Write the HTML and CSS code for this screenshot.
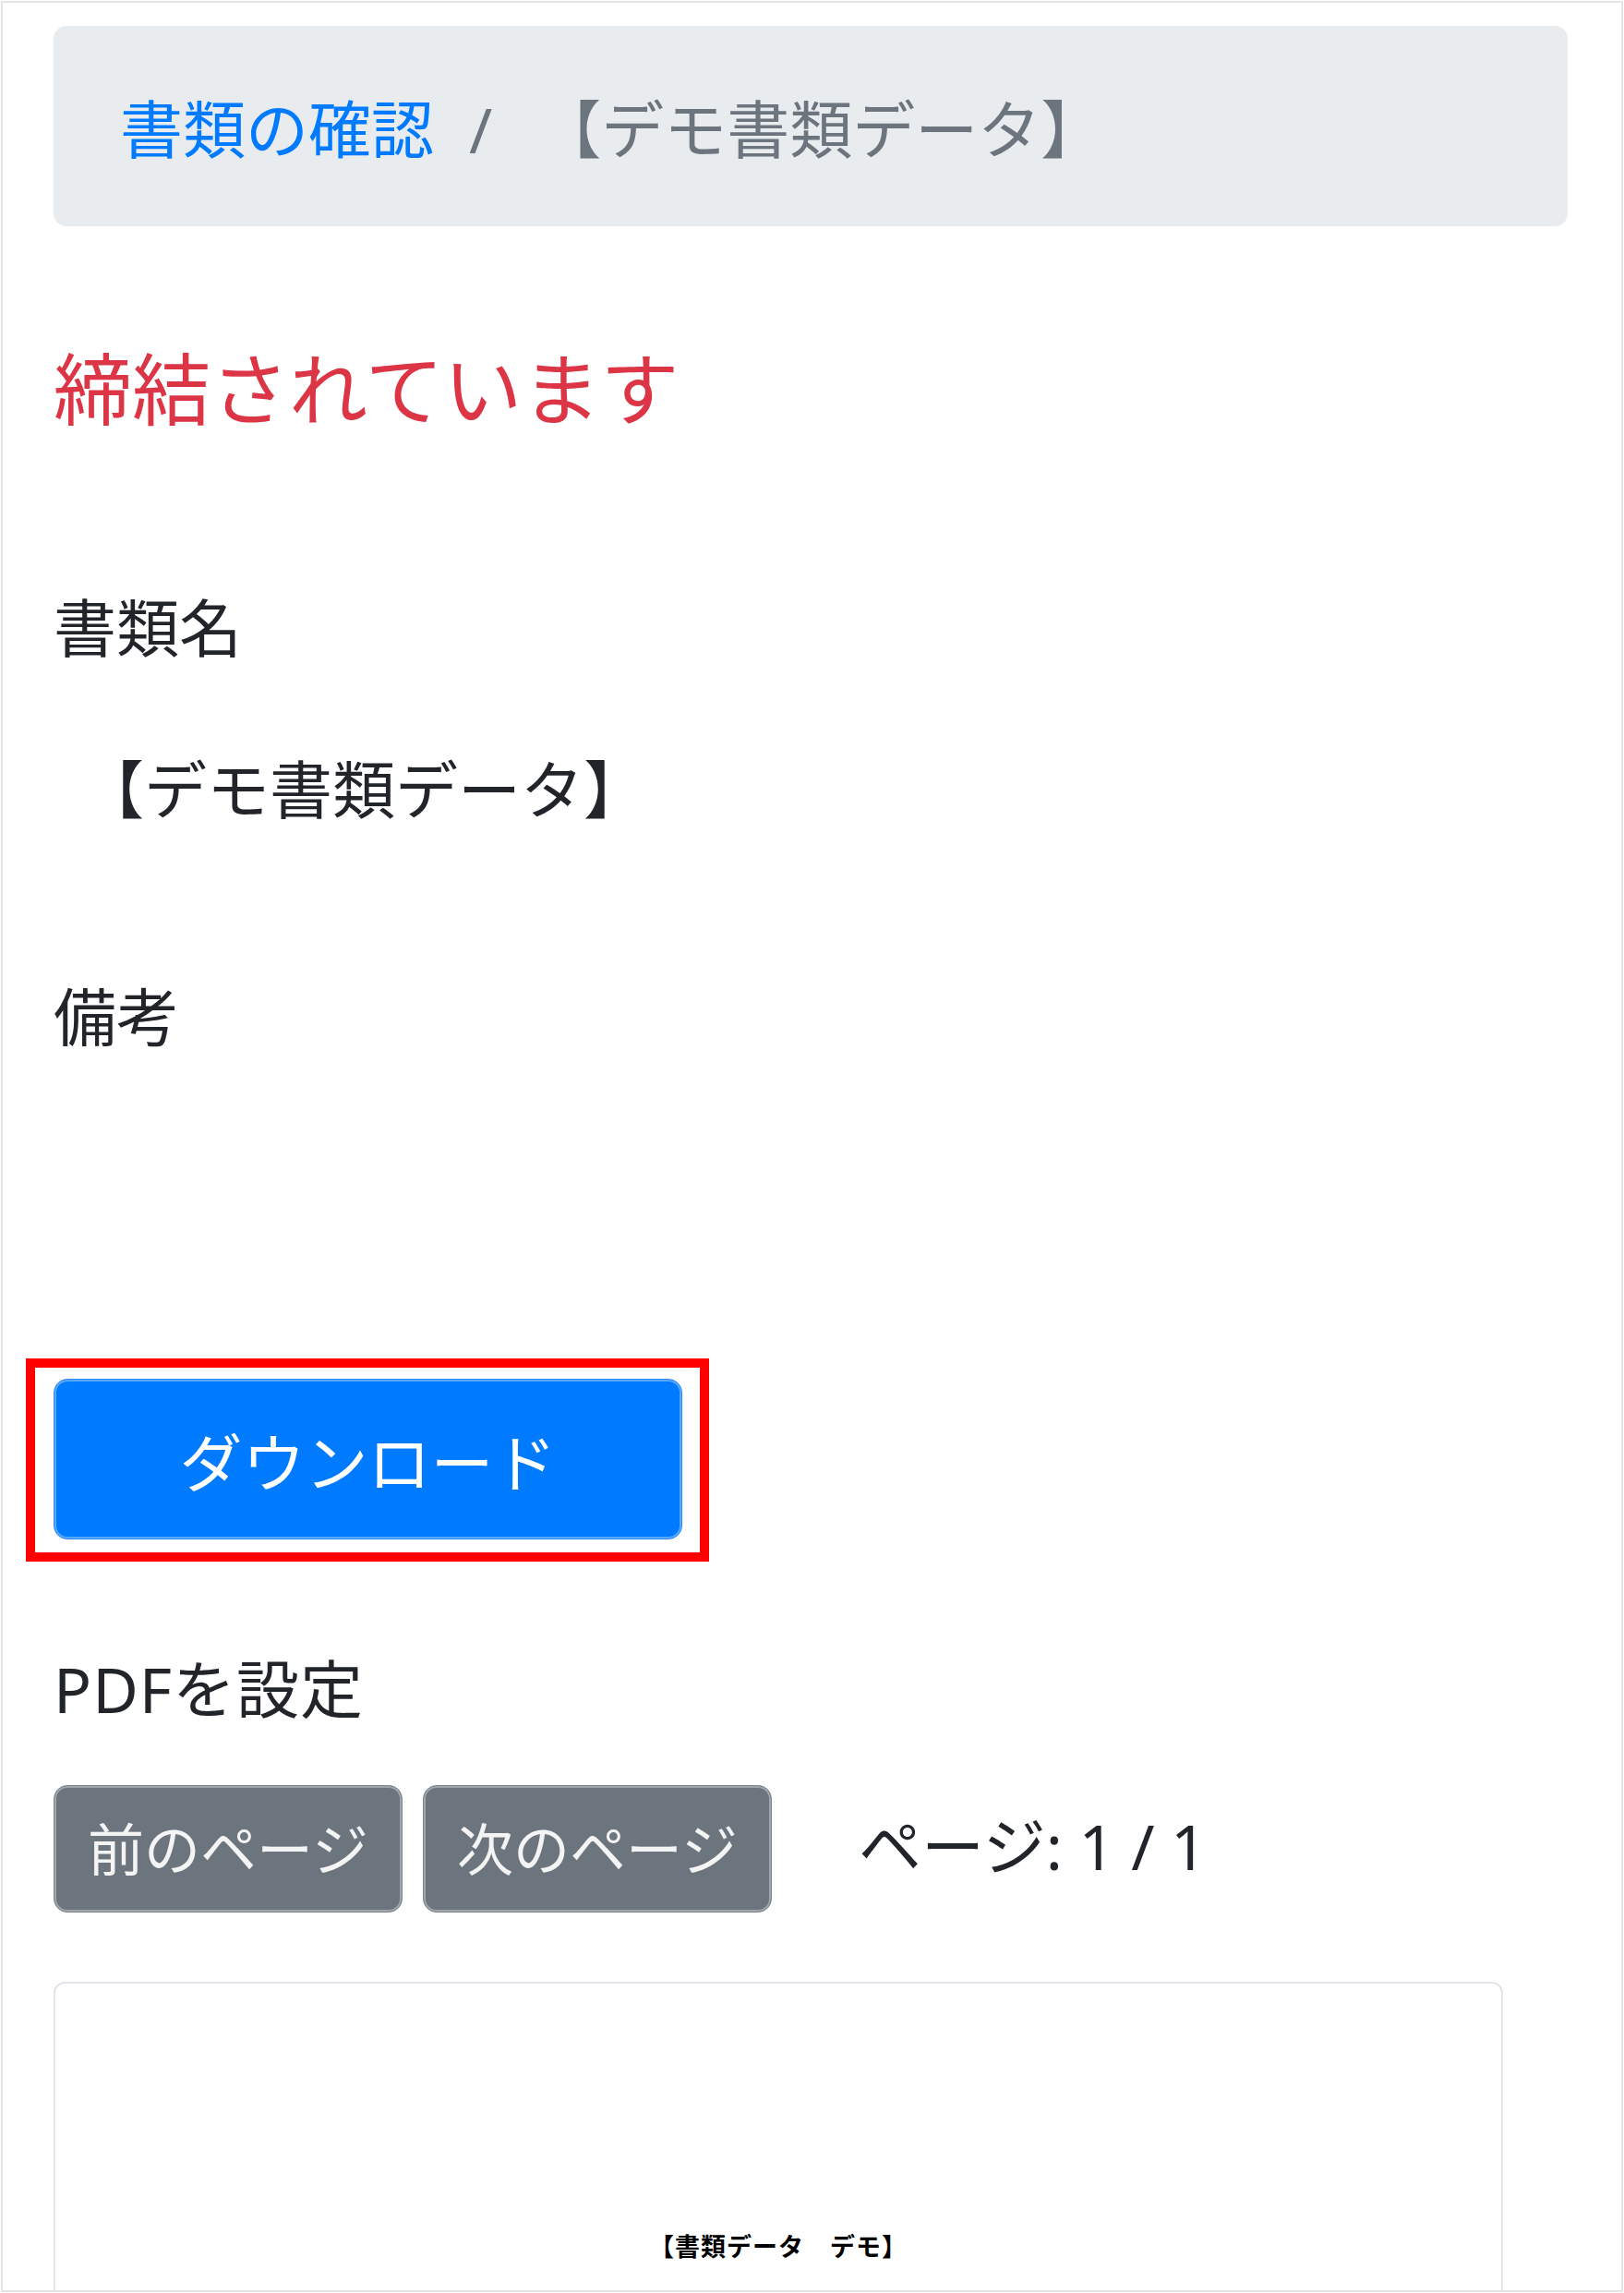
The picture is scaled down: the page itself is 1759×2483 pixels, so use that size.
FILE: index.html
```html
<!DOCTYPE html>
<html lang="ja">
<head>
    <meta charset="UTF-8">
    <meta name="viewport" content="width=device-width, initial-scale=1.0">
    <title>書類の確認</title>
    <link rel="stylesheet" href="styles.css">
</head>
<body>
    <div class="frame">
        <!-- Breadcrumb -->
        <nav class="crumbs">
            <a class="crumb-link" href="#">書類の確認</a>
            <span class="crumb-sep">/</span>
            <span class="crumb-current">【デモ書類データ】</span>
        </nav>

        <h5 class="status">締結されています</h5>

        <div class="field-label">書類名</div>
        <div class="field-value">【デモ書類データ】</div>

        <div class="field-label remarks">備考</div>

        <div class="dl-wrap">
            <button class="btn btn-primary btn-download">ダウンロード</button>
        </div>

        <div class="pdf-title">PDFを設定</div>
        <div class="pager">
            <button class="btn btn-secondary">前のページ</button>
            <button class="btn btn-secondary">次のページ</button>
            <span class="page-info">ページ: <span id="page_num">1</span> / <span id="page_count">1</span></span>
        </div>

        <div class="pdf-view">
            <div class="pdf-page-title">【書類データ　デモ】</div>
        </div>
    </div>
</body>
</html>
```

FILE: styles.css
```css
/* General Styling */
body {
    margin: 0;
    font-family: "Noto Sans", "Noto Sans CJK JP", sans-serif;
    font-size: 68px;
    line-height: 102px;
    color: #212529;
    background: #fff;
}
.frame {
    margin: 1px;
    height: 2481px;
    box-sizing: border-box;
    border: 2px solid #e4e4e4;
    padding: 25px 58px 0 55px;
    overflow: hidden;
}

/* Breadcrumb */
.crumbs {
    display: flex;
    align-items: center;
    background: #e9ecef;
    border-radius: 14px;
    padding: 61px 72px 54px;
}
.crumb-link {
    color: #007bff;
    text-decoration: none;
}
.crumb-sep {
    color: #6c757d;
    padding: 0 50px 0 38px;
}
.crumb-current {
    color: #6c757d;
}

/* Status */
.status {
    margin: 125px 0 0;
    font-size: 85px;
    font-weight: normal;
    line-height: 102px;
    color: #dc3545;
}

/* Fields */
.field-label {
    margin-top: 157px;
}
.field-value {
    margin-top: 73px;
    padding-left: 30px;
}
.field-label.remarks {
    margin-top: 144px;
}

/* Buttons */
.btn {
    font-family: inherit;
    color: #fff;
    border-radius: 15px;
    box-shadow: inset 0 0 0 2px rgba(255, 255, 255, 0.35);
    cursor: pointer;
}
.btn-primary {
    background: #007bff;
    border: 1px solid #2f8dff;
}
.btn-secondary {
    background: #6c757d;
    border: 1px solid #7d858c;
    color: #f4f4f4;
}
.dl-wrap {
    position: relative;
    width: 681px;
    margin-top: 341px;
}
/* red annotation frame */
.dl-wrap::after {
    content: "";
    position: absolute;
    top: -22px;
    left: -30px;
    right: -29px;
    bottom: -24px;
    border: 10px solid #ff0000;
    pointer-events: none;
}
.btn-download {
    display: block;
    width: 100%;
    height: 174px;
    font-size: 68px;
}

/* PDF area */
.pdf-title {
    margin-top: 111px;
    letter-spacing: 1px;
}
.pager {
    display: flex;
    align-items: center;
    gap: 22px;
    margin-top: 53px;
}
.pager .btn {
    width: 378px;
    height: 138px;
    font-size: 61px;
    padding: 0 0 6px;
}
.page-info {
    margin-left: 72px;
    margin-top: -6px;
}
.pdf-view {
    width: 1570px;
    height: 600px;
    margin-top: 75px;
    border: 2px solid #e2e5e9;
    border-radius: 12px;
    box-sizing: border-box;
    padding-top: 265px;
    text-align: center;
}
.pdf-page-title {
    font-size: 27px;
    line-height: 40px;
    font-weight: bold;
    color: #000;
    letter-spacing: 1px;
}
```
